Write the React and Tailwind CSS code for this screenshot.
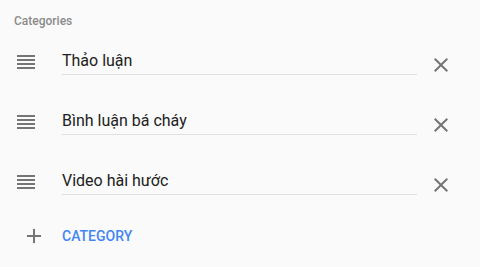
import React from "react";

const ReorderIcon = () => (
  <svg width="24" height="24" viewBox="0 0 24 24" className="fill-[#757575] shrink-0">
    <path d="M3 15h18v-2H3v2zm0 4h18v-2H3v2zm0-8h18V9H3v2zm0-6v2h18V5H3z" />
  </svg>
);

const CloseIcon = () => (
  <svg width="24" height="24" viewBox="0 0 24 24" className="fill-[#757575] shrink-0">
    <path d="M19 6.41L17.59 5 12 10.59 6.41 5 5 6.41 10.59 12 5 17.59 6.41 19 12 13.41 17.59 19 19 17.59 13.41 12z" />
  </svg>
);

const AddIcon = () => (
  <svg width="24" height="24" viewBox="0 0 24 24" className="fill-[#757575] shrink-0">
    <path d="M19 13h-6v6h-2v-6H5v-2h6V5h2v6h6v2z" />
  </svg>
);

const categories = ["Thảo luận", "Bình luận bá cháy", "Video hài hước"];

const App = () => {
  return (
    <div className="h-[267px] w-[480px] bg-[#fafafa] px-[14px] pt-[13px] font-['Roboto',sans-serif]">
      {/* Label */}
      <div className="text-[12px] leading-[16px] font-medium text-[#8a8a8a]">Categories</div>

      {/* Category rows */}
      <div className="mt-[5px]">
        {categories.map((name) => (
          <div key={name} className="flex h-[60px] items-start">
            <div className="mt-[16px]">
              <ReorderIcon />
            </div>
            <div className="ml-[24px] mt-[17px] w-[355px] border-b border-[#e0e0e0] pb-[4px] text-[16px] leading-[19px] text-[#212121]">
              {name}
            </div>
            <div className="ml-[12px] mt-[19px]">
              <CloseIcon />
            </div>
          </div>
        ))}
      </div>

      {/* Add category */}
      <div className="mt-[10px] flex h-[24px] items-center">
        <div className="ml-[8px]">
          <AddIcon />
        </div>
        <span className="ml-[16px] text-[14px] leading-[24px] font-medium text-[#4285f4]">CATEGORY</span>
      </div>
    </div>
  );
};

export default App;
